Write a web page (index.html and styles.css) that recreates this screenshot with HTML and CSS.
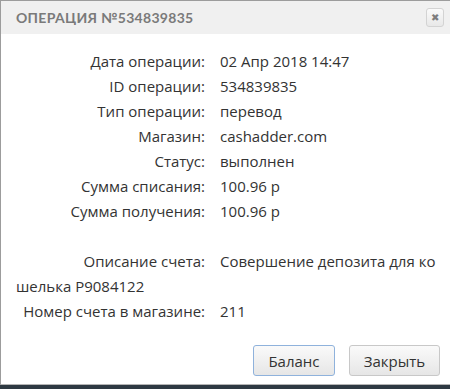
FILE: index.html
```html
<!DOCTYPE html>
<html lang="ru">

<head>
    <meta charset="UTF-8">
    <title>Операция</title>
    <link rel="stylesheet" href="styles.css">
</head>

<body>
    <div class="dialog">
        <div class="dialog-head">
            <span class="dialog-title">Операция №534839835</span>
            <button class="close-btn" title="Закрыть">&#10006;</button>
        </div>

        <div class="dialog-body">
            <div class="row"><span class="lbl">Дата операции:</span><span class="val">02 Апр 2018 14:47</span></div>
            <div class="row"><span class="lbl">ID операции:</span><span class="val">534839835</span></div>
            <div class="row"><span class="lbl">Тип операции:</span><span class="val">перевод</span></div>
            <div class="row"><span class="lbl">Магазин:</span><span class="val">cashadder.com</span></div>
            <div class="row"><span class="lbl">Статус:</span><span class="val">выполнен</span></div>
            <div class="row"><span class="lbl">Сумма списания:</span><span class="val">100.96 р</span></div>
            <div class="row"><span class="lbl">Сумма получения:</span><span class="val">100.96 р</span></div>
            <div class="row empty"></div>
            <div class="row wrap"><span class="lbl">Описание счета:</span><span class="val">Совершение депозита для кошелька P9084122</span></div>
            <div class="row"><span class="lbl">Номер счета в магазине:</span><span class="val">211</span></div>
        </div>

        <div class="dialog-foot">
            <button class="btn focused">Баланс</button>
            <button class="btn close">Закрыть</button>
        </div>
    </div>
</body>

</html>
```

FILE: styles.css
```css
body {
    margin: 0;
    background-color: #2e3942;
    font-family: "Open Sans", Arial, sans-serif;
}

.dialog {
    width: 449px;
    height: 383px;
    background: white;
    border-left: 1px solid #9c9c9c;
    border-top: 1px solid #9c9c9c;
    border-bottom: 1px solid #b5b5b5;
    display: flex;
    flex-direction: column;
}

.dialog-head {
    height: 33px;
    background-color: #f0f0f0;
    display: flex;
    align-items: center;
    justify-content: space-between;
    padding: 0 6px 0 15px;
}

.dialog-title {
    font-family: "Lato", Arial, sans-serif;
    font-weight: bold;
    font-size: 14px;
    letter-spacing: 0.3px;
    text-transform: uppercase;
    color: #7a7a7a;
}

.close-btn {
    width: 18px;
    height: 19px;
    padding: 0;
    border: 1px solid #d3d3d3;
    border-radius: 3px;
    background: linear-gradient(#fafafa, #e8e8e8);
    color: #7d7d7d;
    font-size: 10px;
    line-height: 17px;
}

.dialog-body {
    padding: 15px 6px 0 15px;
    font-size: 15px;
    color: #333;
}

.row {
    line-height: 25px;
    height: 25px;
}

.row.wrap {
    height: 50px;
    word-break: break-all;
}

.lbl {
    display: inline-block;
    width: 189px;
    text-align: right;
    padding-right: 15px;
    word-break: normal;
}

.dialog-foot {
    margin-top: auto;
    display: flex;
    justify-content: flex-end;
    gap: 14px;
    padding: 0 10px 8px 0;
}

.btn {
    height: 31px;
    padding: 0;
    font-family: "Open Sans", Arial, sans-serif;
    font-size: 15px;
    color: #333;
    border: 1px solid #c8c8c8;
    border-radius: 3px;
    background: linear-gradient(#fafafa, #e6e6e6);
}

.btn.focused {
    width: 82px;
    border-color: #8fb2dc;
}

.btn.close {
    width: 91px;
}
```
